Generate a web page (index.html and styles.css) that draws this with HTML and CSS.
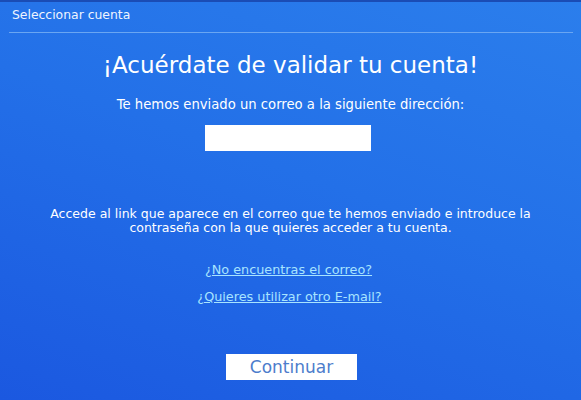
FILE: index.html
```html
<!DOCTYPE html>
<html lang="es">
<head>
<meta charset="utf-8">
<title>Seleccionar cuenta</title>
<link rel="stylesheet" href="styles.css">
</head>
<body>
<div class="window">
  <header class="header">Seleccionar cuenta</header>
  <main class="content">
    <h1 class="title">¡Acuérdate de validar tu cuenta!</h1>
    <p class="sent">Te hemos enviado un correo a la siguiente dirección:</p>
    <div class="email-box"></div>
    <p class="info">Accede al link que aparece en el correo que te hemos enviado e introduce la<br>contraseña con la que quieres acceder a tu cuenta.</p>
    <a class="link link-first" href="#">¿No encuentras el correo?</a>
    <a class="link" href="#">¿Quieres utilizar otro E-mail?</a>
    <button class="continue" type="button">Continuar</button>
  </main>
</div>
</body>
</html>
```

FILE: styles.css
```css
html, body {
  margin: 0;
  padding: 0;
}
body {
  font-family: "DejaVu Sans", Verdana, sans-serif;
  color: #ffffff;
}
.window {
  width: 581px;
  height: 400px;
  box-sizing: border-box;
  border-top: 2px solid #1a4cb5;
  background: linear-gradient(200deg, #2b7eec 0%, #2370e8 45%, #1b58e0 100%);
  display: flex;
  flex-direction: column;
  overflow: hidden;
}
.header {
  margin: 0 8px 0 9px;
  padding: 5px 0 0 3px;
  height: 25px;
  border-bottom: 1px solid #6aa6f2;
  font-size: 12.4px;
  line-height: 16px;
  color: #eef4ff;
}
.content {
  display: flex;
  flex-direction: column;
  align-items: center;
  text-align: center;
}
.title {
  margin: 18px 0 0;
  font-size: 23px;
  font-weight: normal;
  line-height: 28px;
}
.sent {
  margin: 18px 0 0;
  font-size: 13.2px;
  line-height: 15px;
}
.email-box {
  margin: 13px 6px 0 0;
  width: 166px;
  height: 26px;
  background: #ffffff;
}
.info {
  margin: 56px 0 0;
  font-size: 12.5px;
  line-height: 14px;
}
.link {
  font-size: 12.8px;
  line-height: 15px;
  color: #a8e4ff;
  text-decoration: underline;
}
.link-first {
  margin-top: 27px;
  margin-right: 4px;
}
.link + .link {
  margin-top: 12px;
  margin-right: 2px;
}
.continue {
  margin: 50px 0 0 2px;
  width: 131px;
  height: 26px;
  border: none;
  background: #ffffff;
  color: #4d7dcc;
  font-family: "DejaVu Sans", Verdana, sans-serif;
  font-size: 17px;
  padding: 0;
}
```
